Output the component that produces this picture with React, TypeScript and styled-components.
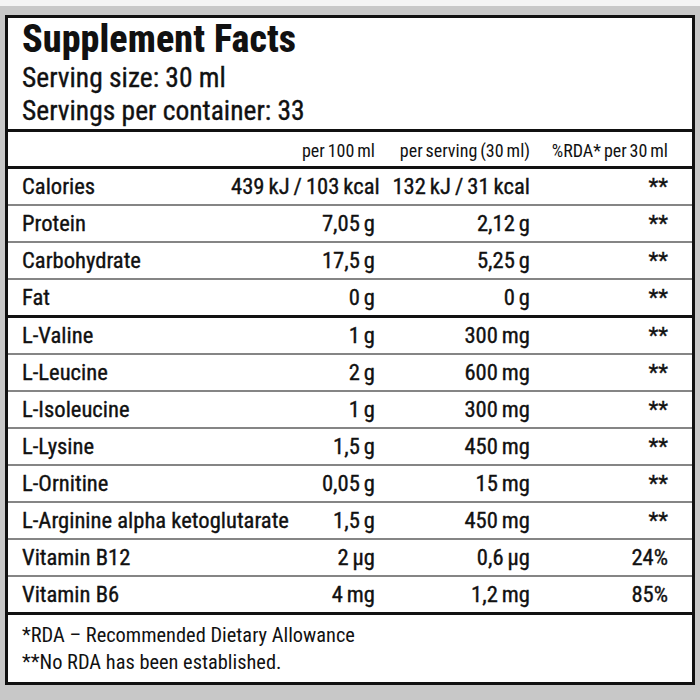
import React from "react";
import styled, { createGlobalStyle } from "styled-components";

const GlobalStyle = createGlobalStyle`
  html, body {
    margin: 0;
    padding: 0;
  }
  body {
    background: linear-gradient(#f4f4f4 0 6px, #c8c8c8 6px);
    font-family: Roboto, "Liberation Sans", Arial, sans-serif;
    font-stretch: 75%;
    color: #111;
  }
`;

const Page = styled.div`
  padding: 15px 5px 15px 5px;
  min-height: 700px;
  box-sizing: border-box;
`;

const Label = styled.div`
  box-sizing: border-box;
  width: 690px;
  height: 670px;
  border: 3px solid #111;
  background: #fff;
  display: flex;
  flex-direction: column;
`;

const Header = styled.div`
  padding: 0 14px 2px;
`;

const Title = styled.div`
  font-size: 38px;
  line-height: 43px;
  font-weight: 800;
  letter-spacing: 0.1px;
`;

const ServingLine = styled.div`
  font-size: 27.5px;
  line-height: 33px;
  font-weight: 400;
  -webkit-text-stroke: 0.35px #111;
`;

const Grid = styled.div`
  display: grid;
  grid-template-columns: 209px 144px 155px 138px;
  align-items: center;
  padding: 0 24px 0 14px;
`;

const ColumnHead = styled(Grid)`
  border-top: 3px solid #111;
  border-bottom: 3px solid #111;
  font-size: 18px;
  padding-top: 3px;
  height: 31px;
`;

const Section = styled.div`
  border-bottom: 3px solid #111;
`;

const Row = styled(Grid)`
  height: 35px;
  border-bottom: 2px solid #858585;
  font-size: 22.6px;
  font-weight: 400;
  -webkit-text-stroke: 0.35px #111;
  &:last-child {
    border-bottom: none;
  }
`;

const Cell = styled.div<{ $align?: "left" | "right" }>`
  text-align: ${(p) => p.$align ?? "right"};
  word-spacing: ${(p) => (p.$align === "left" ? "0" : "-1.2px")};
  white-space: nowrap;
`;

const Footer = styled.div`
  flex: 1;
  padding: 7px 14px 0;
  font-size: 20.4px;
  line-height: 27px;
`;

type Item = [string, string, string, string];

const nutrients: Item[] = [
  ["Calories", "439 kJ / 103 kcal", "132 kJ / 31 kcal", "**"],
  ["Protein", "7,05 g", "2,12 g", "**"],
  ["Carbohydrate", "17,5 g", "5,25 g", "**"],
  ["Fat", "0 g", "0 g", "**"],
];

const aminos: Item[] = [
  ["L-Valine", "1 g", "300 mg", "**"],
  ["L-Leucine", "2 g", "600 mg", "**"],
  ["L-Isoleucine", "1 g", "300 mg", "**"],
  ["L-Lysine", "1,5 g", "450 mg", "**"],
  ["L-Ornitine", "0,05 g", "15 mg", "**"],
  ["L-Arginine alpha ketoglutarate", "1,5 g", "450 mg", "**"],
  ["Vitamin B12", "2 µg", "0,6 µg", "24%"],
  ["Vitamin B6", "4 mg", "1,2 mg", "85%"],
];

const Rows = ({ items }: { items: Item[] }) => (
  <>
    {items.map((it) => (
      <Row key={it[0]}>
        <Cell $align="left">{it[0]}</Cell>
        <Cell>{it[1]}</Cell>
        <Cell>{it[2]}</Cell>
        <Cell>{it[3]}</Cell>
      </Row>
    ))}
  </>
);

export default function App() {
  return (
    <>
      <GlobalStyle />
      <Page>
        <Label>
          <Header>
            <Title>Supplement Facts</Title>
            <ServingLine>Serving size: 30 ml</ServingLine>
            <ServingLine>Servings per container: 33</ServingLine>
          </Header>
          <ColumnHead>
            <Cell $align="left"></Cell>
            <Cell>per 100 ml</Cell>
            <Cell>per serving (30 ml)</Cell>
            <Cell>%RDA* per 30 ml</Cell>
          </ColumnHead>
          <Section>
            <Rows items={nutrients} />
          </Section>
          <Section>
            <Rows items={aminos} />
          </Section>
          <Footer>
            <div>*RDA – Recommended Dietary Allowance</div>
            <div>**No RDA has been established.</div>
          </Footer>
        </Label>
      </Page>
    </>
  );
}
